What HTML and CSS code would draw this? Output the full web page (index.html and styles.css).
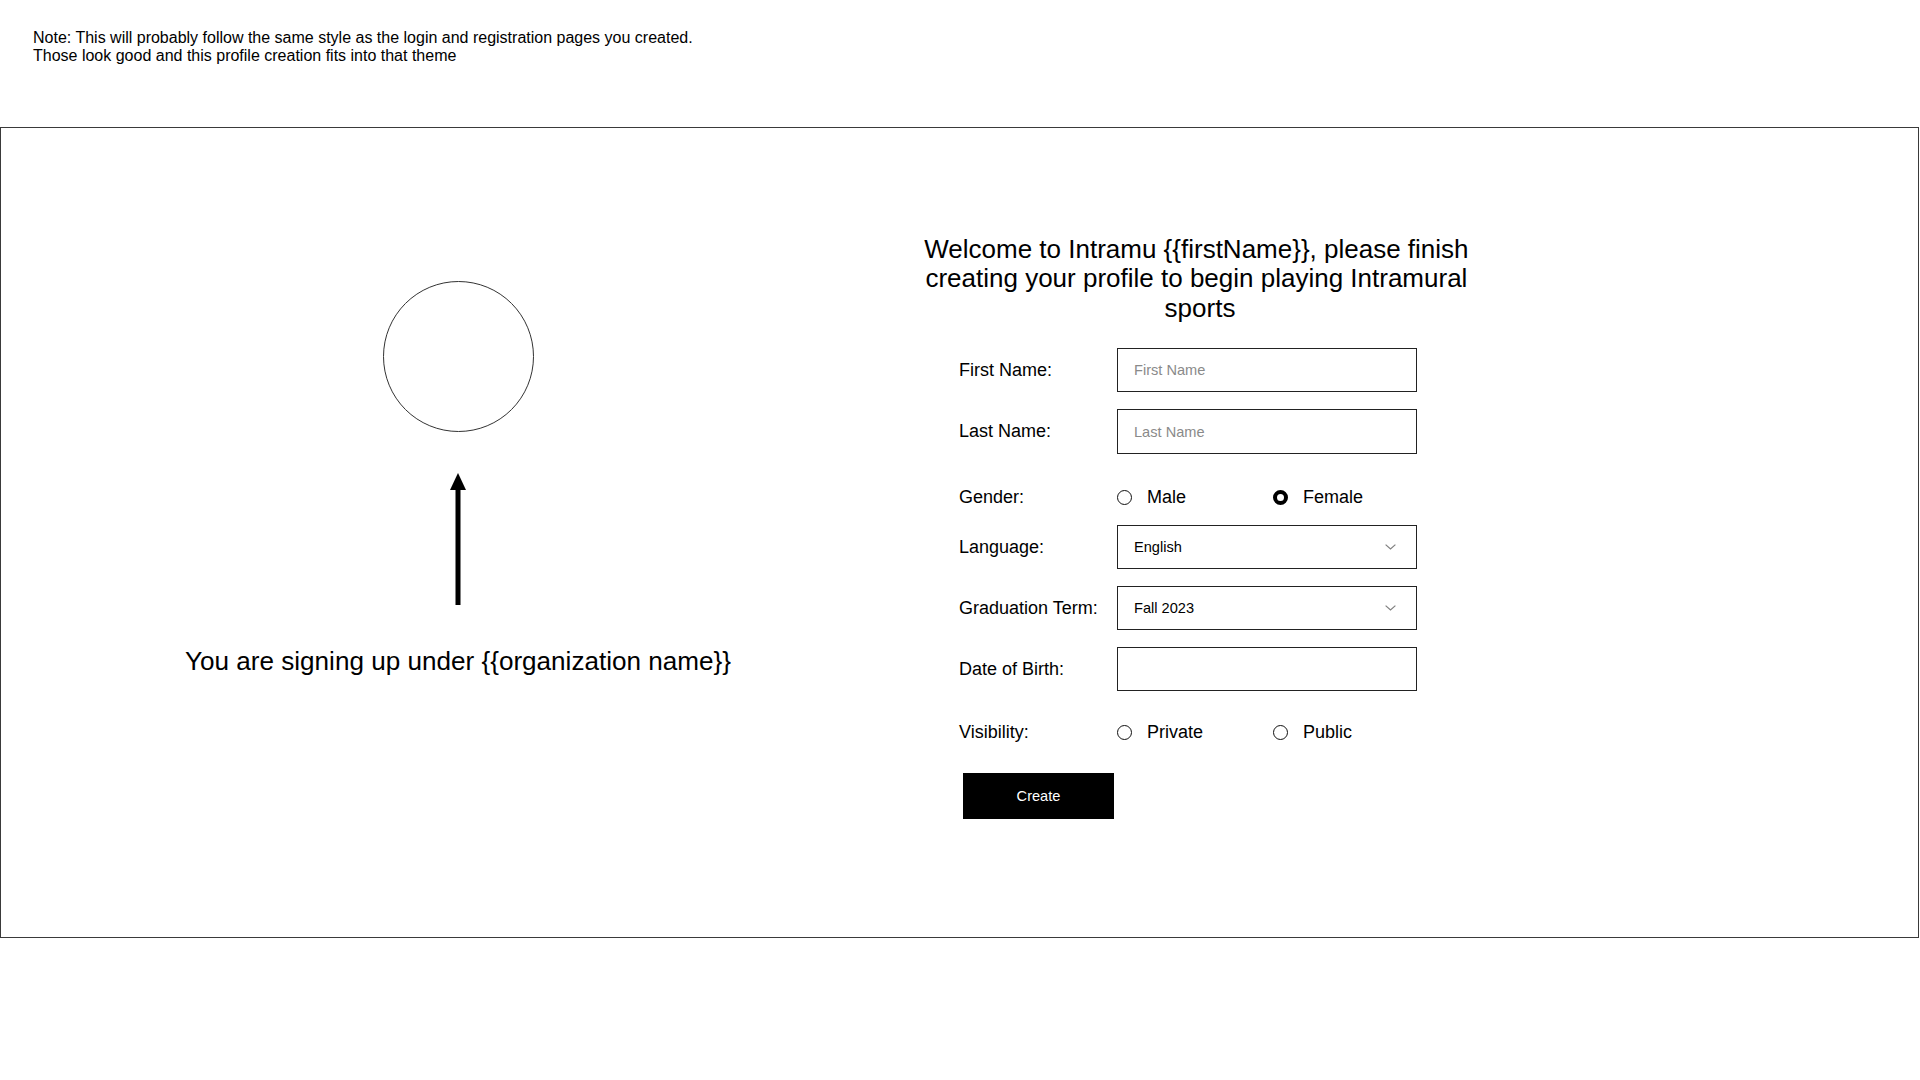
FILE: index.html
```html
<!DOCTYPE html>
<html lang="en">
<head>
<meta charset="utf-8">
<title>Create Profile</title>
<link rel="stylesheet" href="styles.css">
</head>
<body>
<p class="note">Note: This will probably follow the same style as the login and registration pages you created.<br>Those look good and this profile creation fits into that theme</p>

<main class="frame">
  <section class="org-panel">
    <div class="avatar"></div>
    <svg class="arrow" width="18" height="132" viewBox="0 0 18 132">
      <polygon points="9,0 17,17 1,17" fill="#000"/>
      <rect x="6.5" y="15" width="5" height="117" fill="#000"/>
    </svg>
    <p class="org-text">You are signing up under {{organization name}}</p>
  </section>

  <section class="profile-panel">
    <h1 class="welcome">Welcome to Intramu {{firstName}}, please finish creating your profile to begin playing Intramural sports</h1>
    <form class="form">
      <div class="row row-first">
        <label class="label">First Name:</label>
        <input class="field" type="text" placeholder="First Name">
      </div>
      <div class="row row-last">
        <label class="label">Last Name:</label>
        <input class="field" type="text" placeholder="Last Name">
      </div>
      <div class="row row-choice row-gender">
        <span class="label">Gender:</span>
        <span class="option"><span class="radio"></span>Male</span>
        <span class="option"><span class="radio radio-on"></span>Female</span>
      </div>
      <div class="row row-lang">
        <span class="label">Language:</span>
        <div class="field select"><span>English</span>
          <svg width="11" height="6" viewBox="0 0 11 6"><polyline points="0.6,0.6 5.5,5 10.4,0.6" fill="none" stroke="#808080" stroke-width="1.2"/></svg>
        </div>
      </div>
      <div class="row row-term">
        <span class="label">Graduation Term:</span>
        <div class="field select"><span>Fall 2023</span>
          <svg width="11" height="6" viewBox="0 0 11 6"><polyline points="0.6,0.6 5.5,5 10.4,0.6" fill="none" stroke="#808080" stroke-width="1.2"/></svg>
        </div>
      </div>
      <div class="row row-dob">
        <label class="label">Date of Birth:</label>
        <input class="field" type="text">
      </div>
      <div class="row row-choice row-vis">
        <span class="label">Visibility:</span>
        <span class="option"><span class="radio"></span>Private</span>
        <span class="option"><span class="radio"></span>Public</span>
      </div>
      <button class="create" type="button">Create</button>
    </form>
  </section>
</main>
</body>
</html>
```

FILE: styles.css
```css
* { box-sizing: border-box; }

html, body {
  margin: 0;
  padding: 0;
  background: #fff;
  color: #000;
  font-family: "Liberation Sans", Arial, sans-serif;
}

.note {
  margin: 0;
  padding: 29px 0 0 33px;
  font-size: 16px;
  line-height: 18px;
}

.frame {
  margin-top: 62px;
  width: 1919px;
  height: 811px;
  border: 1px solid #3a3a3a;
  display: flex;
}

.org-panel {
  width: 914px;
  display: flex;
  flex-direction: column;
  align-items: center;
  padding-top: 153px;
}

.avatar {
  width: 151px;
  height: 151px;
  border: 1px solid #333;
  border-radius: 50%;
}

.arrow {
  display: block;
  margin-top: 41px;
}

.org-text {
  margin: 41px 0 0;
  font-size: 26.1px;
  line-height: 30px;
}

.profile-panel {
  width: 570px;
  padding-top: 107px;
}

.welcome {
  margin: 0;
  font-weight: normal;
  font-size: 26px;
  line-height: 29.4px;
  text-align: center;
  white-space: break-spaces;
}

.form {
  padding-left: 44px;
  display: flex;
  flex-direction: column;
  align-items: flex-start;
}

.row {
  display: flex;
  align-items: center;
  height: 44px;
}

.row-first { margin-top: 25px; }
.row-last { margin-top: 17px; height: 45px; }
.row-gender { margin-top: 28px; height: 30px; }
.row-lang { margin-top: 13px; }
.row-term { margin-top: 17px; }
.row-dob { margin-top: 17px; }
.row-vis { margin-top: 26px; height: 30px; }

.label {
  width: 158px;
  font-size: 18px;
}

.field {
  width: 300px;
  height: 44px;
  border: 1px solid #222;
  border-radius: 0;
  padding: 0 16px;
  font-family: "Liberation Sans", Arial, sans-serif;
  font-size: 14.6px;
  color: #000;
  background: #fff;
  outline: none;
}

.row-last .field { height: 45px; }

.field::placeholder { color: #8a8a8a; }

.select {
  display: flex;
  align-items: center;
  justify-content: space-between;
  padding-right: 20px;
}

.option {
  display: flex;
  align-items: center;
  width: 156px;
  font-size: 18px;
}

.radio {
  width: 15px;
  height: 15px;
  border: 1.4px solid #111;
  border-radius: 50%;
  margin-right: 15px;
}

.radio-on { border: 4.6px solid #000; }

.create {
  margin: 26px 0 0 4px;
  width: 151px;
  height: 46px;
  border: 0;
  background: #000;
  color: #fff;
  font-family: "Liberation Sans", Arial, sans-serif;
  font-size: 14.6px;
  padding: 0;
}
```
